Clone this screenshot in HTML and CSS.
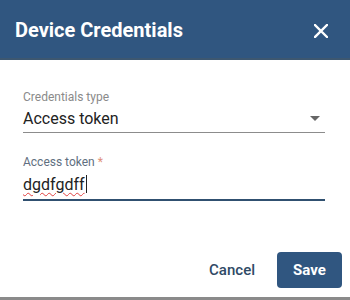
FILE: index.html
```html
<!DOCTYPE html>
<html>
<head>
<meta charset="utf-8">
<link rel="stylesheet" href="styles.css">
</head>
<body>
<div class="dialog">
  <header class="dialog-header">
    <h2 class="dialog-title">Device Credentials</h2>
    <svg class="close-icon" width="14" height="14" viewBox="0 0 14 14">
      <path d="M1 1L13 13M13 1L1 13" stroke="#fff" stroke-width="2.4" stroke-linecap="square"/>
    </svg>
  </header>
  <main class="dialog-content">
    <div class="field field-select">
      <div class="field-label">Credentials type</div>
      <div class="field-row">
        <span class="field-value">Access token</span>
        <span class="select-arrow"></span>
      </div>
    </div>
    <div class="field field-focused">
      <div class="field-label">Access token <span class="required">*</span></div>
      <div class="field-row">
        <span class="field-value"><span class="misspelled">dgdfgdff</span><span class="caret"></span></span>
      </div>
    </div>
  </main>
  <footer class="dialog-actions">
    <button class="btn btn-text">Cancel</button>
    <button class="btn btn-primary">Save</button>
  </footer>
  <div class="bottom-bar"></div>
</div>
</body>
</html>
```
FILE: styles.css
```css
html, body {
  margin: 0;
  padding: 0;
  background: #fff;
}
.dialog {
  width: 350px;
  height: 300px;
  display: flex;
  flex-direction: column;
  font-family: Roboto, "Liberation Sans", sans-serif;
  overflow: hidden;
}
.dialog-header {
  height: 58px;
  background: #305680;
  border-bottom: 2px solid #3d5770;
  display: flex;
  align-items: center;
  justify-content: space-between;
  padding: 0 22px 0 15px;
  box-sizing: content-box;
}
.dialog-title {
  margin: 0;
  color: #fff;
  font-size: 20px;
  font-weight: 700;
  letter-spacing: 0;
  padding-top: 2px;
}
.close-icon {
  display: block;
  margin-top: 3px;
}
.dialog-content {
  padding: 30px 25px 0 23px;
  flex: 1;
}
.field-label {
  font-size: 12px;
  color: #8a8a8a;
  line-height: 14px;
}
.field-row {
  display: flex;
  align-items: center;
  justify-content: space-between;
  height: 28px;
  border-bottom: 1px solid #8c8c8c;
}
.field-value {
  font-size: 16px;
  color: #222;
  line-height: 20px;
  padding-top: 2px;
}
.select-arrow {
  width: 0;
  height: 0;
  border-left: 5px solid transparent;
  border-right: 5px solid transparent;
  border-top: 5px solid #666;
  margin-right: 5px;
}
.field-focused {
  margin-top: 22px;
}
.field-focused .field-label {
  color: #5f6f80;
}
.field-focused .field-row {
  border-bottom: 2px solid #305070;
  height: 30px;
}
.required {
  color: #e0907a;
}
.misspelled {
  text-decoration: underline wavy #e04040;
  text-decoration-thickness: 1px;
  text-underline-offset: 2px;
}
.caret {
  display: inline-block;
  width: 1px;
  height: 18px;
  background: #222;
  vertical-align: -3px;
  margin-left: 1px;
}
.dialog-actions {
  display: flex;
  justify-content: flex-end;
  align-items: center;
  gap: 22px;
  padding: 0 8px 9px 0;
}
.btn {
  font-family: Roboto, "Liberation Sans", sans-serif;
  font-size: 15px;
  font-weight: 500;
  border: none;
  cursor: pointer;
}
.btn-text {
  background: transparent;
  color: #2f4a66;
  padding: 0;
}
.btn-primary {
  background: #305680;
  color: #fff;
  font-weight: 700;
  width: 65px;
  height: 36px;
  border-radius: 4px;
}
.bottom-bar {
  height: 3px;
  background: #8a8a8a;
}
```
